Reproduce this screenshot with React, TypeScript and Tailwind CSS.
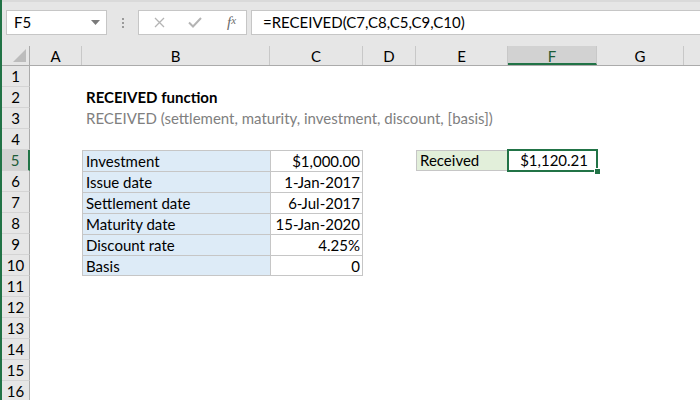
import React from "react";

type CellDef = {
  text?: string;
  align?: "left" | "right";
  className?: string;
  bold?: boolean;
};

const COLS = [
  { key: "A", w: "w-[52px]" },
  { key: "B", w: "w-[188px]" },
  { key: "C", w: "w-[93px]" },
  { key: "D", w: "w-[53px]" },
  { key: "E", w: "w-[92px]" },
  { key: "F", w: "w-[89px]" },
  { key: "G", w: "w-[87px]" },
];

const tableLabels: Record<number, [string, string]> = {
  5: ["Investment", "$1,000.00"],
  6: ["Issue date", "1-Jan-2017"],
  7: ["Settlement date", "6-Jul-2017"],
  8: ["Maturity date", "15-Jan-2020"],
  9: ["Discount rate", "4.25%"],
  10: ["Basis", "0"],
};

function RowHeader({ n }: { n: number }) {
  const active = n === 5;
  return (
    <div
      className={`w-[28px] h-full shrink-0 flex items-center justify-center border-b border-[#d4d4d4] ${
        active
          ? "bg-[#d2d2d2] border-r-2 border-r-[#217346] text-[#1d5c38]"
          : "bg-[#e6e6e6] border-r border-r-[#ababab] text-black"
      }`}
    >
      {n}
    </div>
  );
}

function GridRow({ n }: { n: number }) {
  const t = tableLabels[n];
  return (
    <div className="flex h-[21px] leading-[21px]">
      <RowHeader n={n} />
      {/* A */}
      <div className="w-[52px] shrink-0" />
      {/* B */}
      {t ? (
        <div
          className={`w-[188px] shrink-0 bg-[#ddebf7] border-t border-l border-[#c6c6c6] pl-[3px] ${
            n === 10 ? "border-b" : ""
          }`}
        >
          {t[0]}
        </div>
      ) : (
        <div className="w-[188px] shrink-0 pl-[4px] whitespace-nowrap overflow-visible">
          {n === 2 && <span className="font-bold">RECEIVED function</span>}
          {n === 3 && (
            <span className="text-[#808080]">
              RECEIVED (settlement, maturity, investment, discount, [basis])
            </span>
          )}
        </div>
      )}
      {/* C */}
      {t ? (
        <div
          className={`w-[93px] shrink-0 bg-white border-t border-l border-r border-[#c6c6c6] text-right pr-[2px] ${
            n === 10 ? "border-b" : ""
          }`}
        >
          {t[1]}
        </div>
      ) : (
        <div className="w-[93px] shrink-0" />
      )}
      {/* D */}
      <div className="w-[53px] shrink-0" />
      {/* E */}
      {n === 5 ? (
        <div className="w-[92px] shrink-0 bg-[#e2efda] border border-[#c6c6c6] pl-[3px] leading-[19px]">
          Received
        </div>
      ) : (
        <div className="w-[92px] shrink-0" />
      )}
      {/* F */}
      {n === 5 ? (
        <div className="w-[89px] shrink-0 relative text-right pr-[9px]">
          $1,120.21
          <div className="absolute -left-px -top-px -right-px -bottom-px border-2 border-[#217346]" />
          <div className="absolute right-[-4px] bottom-[-4px] w-[7px] h-[7px] bg-[#217346] border border-white" />
        </div>
      ) : (
        <div className="w-[89px] shrink-0" />
      )}
      <div className="w-[87px] shrink-0" />
    </div>
  );
}

export default function App() {
  const rows = Array.from({ length: 16 }, (_, i) => i + 1);
  return (
    <div className="w-[700px] h-[400px] overflow-hidden bg-white border-l-2 border-[#217346] font-['Lato','Liberation_Sans',sans-serif] text-[15px] text-black">
      {/* Name box + formula bar */}
      <div className="h-[46px] bg-[#e6e6e6] border-t-2 border-[#dadada] flex items-start pt-[8px] pl-[4px]">
        <div className="w-[101px] h-[25px] shrink-0 bg-white border border-[#c6c6c6] flex items-center justify-between pl-[7px] pr-[6px]">
          <span>F5</span>
          <svg width="9" height="5" viewBox="0 0 9 5">
            <path d="M0 0h9L4.5 5z" fill="#7a7a7a" />
          </svg>
        </div>
        <div className="w-[31px] h-[25px] shrink-0 flex flex-col items-center justify-center gap-[2px]">
          <span className="w-[2px] h-[2px] bg-[#9a9a9a]" />
          <span className="w-[2px] h-[2px] bg-[#9a9a9a]" />
          <span className="w-[2px] h-[2px] bg-[#9a9a9a]" />
        </div>
        <div className="w-[109px] h-[25px] shrink-0 bg-white border border-[#c6c6c6] flex items-center">
          <div className="w-[36px] flex justify-center pl-[4px]">
            <svg width="11" height="11" viewBox="0 0 11 11">
              <path d="M1 1l9 9M10 1l-9 9" stroke="#b4b4b4" strokeWidth="1.3" />
            </svg>
          </div>
          <div className="w-[36px] flex justify-center pl-[4px]">
            <svg width="14" height="11" viewBox="0 0 14 11">
              <path d="M1 5.5l4 4L13 1" stroke="#b4b4b4" strokeWidth="2" fill="none" />
            </svg>
          </div>
          <div className="flex-1 flex justify-center pl-[6px] font-['Liberation_Serif',serif] italic text-[#6a6a6a] text-[15px] leading-none">
            f<span className="text-[11px]">x</span>
          </div>
        </div>
        <div className="ml-[4px] flex-1 h-[25px] bg-white border border-r-0 border-[#c6c6c6] flex items-center pl-[11px] whitespace-nowrap">
          =RECEIVED(C7,C8,C5,C9,C10)
        </div>
      </div>

      {/* Column headers */}
      <div className="flex h-[20px] leading-[20px] bg-[#e6e6e6] border-b border-[#ababab]">
        <div className="w-[28px] h-full shrink-0 border-r border-[#ababab] flex items-end justify-end pr-[3px] pb-[3px]">
          <svg width="13" height="13" viewBox="0 0 13 13">
            <path d="M13 0V13H0z" fill="#bcbcbc" />
          </svg>
        </div>
        {COLS.map((c) => (
          <div
            key={c.key}
            className={`${c.w} h-full shrink-0 text-center border-r border-[#c8c8c8] ${
              c.key === "F"
                ? "bg-[#d2d2d2] border-b-2 border-b-[#217346] text-[#1d5c38]"
                : ""
            }`}
          >
            {c.key}
          </div>
        ))}
      </div>

      {rows.map((n) => (
        <GridRow key={n} n={n} />
      ))}
    </div>
  );
}
